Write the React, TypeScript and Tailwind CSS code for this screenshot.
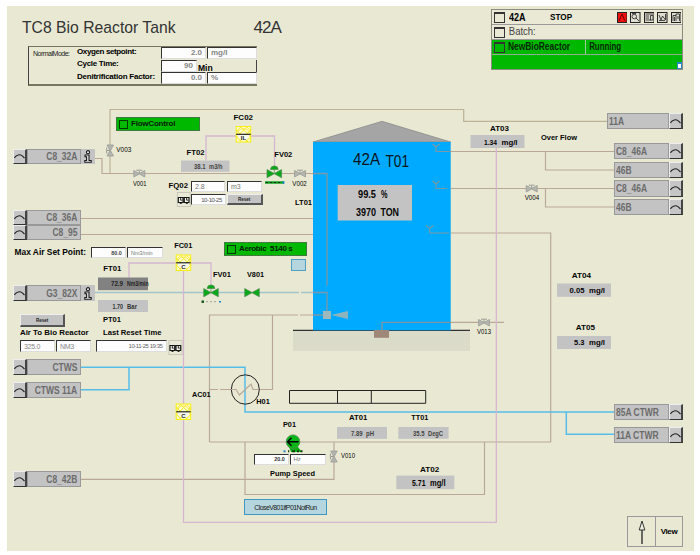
import React from "react";

type LabelSpec = {
  t: string;
  x: number;
  y: number;
  w: number;
  s?: number;
  regular?: boolean;
  fill?: string;
};

const PIPE = "#b9a898";
const SIGNAL = "#d4b6cf";
const WATER = "#56bde9";

const labels: LabelSpec[] = [
  { t: "FC02", x: 233.5, y: 119.7, w: 19.5 },
  { t: "FT02", x: 186.5, y: 155, w: 18 },
  { t: "FV02", x: 274.3, y: 156.5, w: 18 },
  { t: "FQ02", x: 168.5, y: 188, w: 19.5 },
  { t: "LT01", x: 295, y: 205, w: 17 },
  { t: "FC01", x: 174.3, y: 248.2, w: 18 },
  { t: "FT01", x: 103.3, y: 270.5, w: 18 },
  { t: "PT01", x: 103, y: 322.2, w: 18 },
  { t: "Max Air Set Point:", x: 14.5, y: 255, w: 71.5, s: 9.2 },
  { t: "Air To Bio Reactor", x: 20, y: 335, w: 68.5 },
  { t: "Last Reset Time", x: 103, y: 335, w: 58.5 },
  { t: "AC01", x: 192, y: 396.7, w: 18.5 },
  { t: "H01", x: 256.3, y: 404.2, w: 13.5 },
  { t: "FV01", x: 213, y: 277.3, w: 18 },
  { t: "V801", x: 247, y: 277.3, w: 17 },
  { t: "AT03", x: 490, y: 130.7, w: 19 },
  { t: "Over Flow", x: 541, y: 139.7, w: 36 },
  { t: "AT04", x: 571.7, y: 277.5, w: 19.3 },
  { t: "AT05", x: 575.7, y: 330, w: 19.3 },
  { t: "AT01", x: 349, y: 419.5, w: 18.3 },
  { t: "TT01", x: 411.3, y: 419.5, w: 17 },
  { t: "P01", x: 283, y: 427, w: 13 },
  { t: "Pump Speed", x: 270, y: 476, w: 45 },
  { t: "AT02", x: 420, y: 472, w: 19.3 },
  { t: "V002", x: 292.3, y: 185.7, w: 14.5, s: 7, regular: true },
  { t: "V003", x: 116.3, y: 152.3, w: 15, s: 7, regular: true },
  { t: "V001", x: 133, y: 186, w: 13.5, s: 7, regular: true },
  { t: "V004", x: 524.7, y: 200.3, w: 14.5, s: 7, regular: true },
  { t: "V013", x: 477, y: 334.3, w: 14, s: 7, regular: true },
  { t: "V010", x: 341, y: 458.3, w: 14, s: 7, regular: true },
  { t: "42A", x: 353, y: 165, w: 27, s: 16, regular: true, fill: "#0a1420" },
  { t: "T01", x: 385.5, y: 167, w: 23.5, s: 16, regular: true, fill: "#0a1420" },
];

type Reading = { x: number; y: number; w: number; h: number; fill?: string; text: LabelSpec[] };

const readings: Reading[] = [
  { x: 181, y: 160.5, w: 48.5, h: 11.3, text: [{ t: "38.1", x: 194, y: 169, w: 11.5, s: 7, fill: "#444" }, { t: "m3/h", x: 209, y: 169, w: 13.5, s: 7, fill: "#444" }] },
  { x: 98, y: 277.5, w: 50, h: 12.7, fill: "#828282", text: [{ t: "72.9", x: 111, y: 286.3, w: 12, s: 7, fill: "#222" }, { t: "Nm3/min", x: 127, y: 286.3, w: 21.5, s: 7, fill: "#222" }] },
  { x: 98, y: 300, w: 50, h: 12, text: [{ t: "1.70", x: 112.5, y: 308.8, w: 10.5, s: 7, fill: "#333" }, { t: "Bar", x: 127, y: 308.8, w: 10, s: 7, fill: "#333" }] },
  { x: 470.5, y: 135, w: 54, h: 13, text: [{ t: "1.34", x: 484, y: 144.6, w: 13 }, { t: "mg/l", x: 501.5, y: 144.6, w: 16 }] },
  { x: 557, y: 283.5, w: 54, h: 13.3, text: [{ t: "0.05", x: 569.5, y: 293.3, w: 15 }, { t: "mg/l", x: 589, y: 293.3, w: 16 }] },
  { x: 557, y: 336, w: 54, h: 13, text: [{ t: "5.3", x: 574, y: 345.4, w: 10.5 }, { t: "mg/l", x: 589, y: 345.4, w: 16 }] },
  { x: 337, y: 427, w: 50, h: 11.8, text: [{ t: "7.89", x: 351, y: 436, w: 11.5, s: 7, fill: "#444" }, { t: "pH", x: 366, y: 436, w: 8, s: 7, fill: "#444" }] },
  { x: 398.3, y: 427, w: 50.3, h: 11.8, text: [{ t: "35.5", x: 413, y: 436, w: 11.5, s: 7, fill: "#444" }, { t: "DegC", x: 428, y: 436, w: 15, s: 7, fill: "#444" }] },
  { x: 396.3, y: 475.6, w: 58, h: 13.6, text: [{ t: "5.71", x: 412, y: 485.6, w: 13.5, s: 8.5 }, { t: "mg/l", x: 430, y: 485.6, w: 15.5, s: 8.5 }] },
  { x: 337.7, y: 185, w: 74.3, h: 35.5, text: [
    { t: "99.5", x: 358, y: 198, w: 18, s: 10 }, { t: "%", x: 381, y: 198, w: 6.5, s: 10 },
    { t: "3970", x: 356, y: 215.8, w: 20, s: 10 }, { t: "TON", x: 380.5, y: 215.8, w: 18.5, s: 10 },
  ] },
];

function Label({ t, x, y, w, s = 8, regular, fill = "#050505" }: LabelSpec) {
  return (
    <text
      x={x}
      y={y}
      textLength={w}
      lengthAdjust="spacingAndGlyphs"
      fontSize={s}
      fontWeight={regular ? 400 : 700}
      fill={fill}
    >
      {t}
    </text>
  );
}

/** Hand valve: grey bow tie with a small stem. */
function Valve({ x, y, vertical }: { x: number; y: number; vertical?: boolean }) {
  return (
    <g transform={`translate(${x} ${y})${vertical ? " rotate(-90)" : ""}`}>
      <path d="M-5.5-3 L0 0 L5.5-3 V3.5 L0 0.5 L-5.5 3.5Z" fill="#b5b5b0" stroke="#9b9b98" strokeWidth=".8" />
      <path d="M0 0V-3M-3-3.3H3" stroke="#9b9b98" strokeWidth="1" fill="none" />
    </g>
  );
}

/** Automatic valve, with an actuator dome when it is controlled. */
function ControlValve({ x, y, dome }: { x: number; y: number; dome?: boolean }) {
  return (
    <g transform={`translate(${x} ${y})`}>
      <path d="M-7.3-4 L0 0 L7.3-4 V4.3 L0 .3 L-7.3 4.3Z" fill="#08a818" stroke="#5a8a5a" strokeWidth=".7" />
      {dome && <path d="M0 0V-4M-3.8-4A3.8 3.6 0 0 1 3.8-4Z" fill="#08a818" stroke="#4a8a4a" strokeWidth=".7" />}
    </g>
  );
}

function Controller({ x, y, mode }: { x: number; y: number; mode: string }) {
  return (
    <g transform={`translate(${x} ${y})`}>
      <rect x=".5" y=".5" width="14.5" height="15.5" fill="#fdfbd0" stroke="#f8ee10" />
      <path d="M1 5 5 1M1 11 11 1M4 15 15 4M10 16 15 11M11 1 15 5M5 1 15 11M1 4 12 16M1 11 6 16" stroke="#f6e81c" strokeWidth="1" />
      <path d="M1.5 8.3A6.3 6.5 0 0 0 14 8.3Z" fill="#f6f6ee" />
      <path d="M1.5 8A6.3 6.3 0 0 1 14 8" fill="none" stroke="#f3e63a" strokeWidth=".8" />
      <path d="M.5 8.3H15" stroke="#111" strokeWidth="1.1" />
      <text x="7.8" y="14.2" textAnchor="middle" fontSize="6" fontWeight="700" fill="#222">{mode}</text>
    </g>
  );
}

/** Stand pipe inlet inside the tank. */
function Inlet({ x, y, to }: { x: number; y: number; to: number }) {
  return <path d={`M${x - 3.5} ${y - 7.5}L${x} ${y - 4.5}L${x + 3.5} ${y - 7.5}M${x} ${y - 4.5}V${y}H${to}`} stroke="#7c98a4" strokeWidth="1.1" fill="none" />;
}

function Counter({ x, y }: { x: number; y: number }) {
  return (
    <g transform={`translate(${x} ${y})`}>
      <rect x=".5" y=".5" width="13" height="14" fill="#e9e9d6" stroke="#c8c8ba" />
      <path d="M1.5 5.5h4.7v5H1.5zM7.5 5.5h4.7v5H7.5z" fill="#f4f4e8" stroke="#151515" strokeWidth="1.2" />
      <path d="M3.8 6v2.2h1.5M9.8 6v2.2h1.5M3 11.5h2M9 11.5h2" stroke="#151515" strokeWidth=".9" fill="none" />
    </g>
  );
}

function Diagram() {
  return (
    <svg className="absolute left-0 top-0 block font-['Liberation_Sans',sans-serif]" width="700" height="555" viewBox="0 0 700 555">
      {/* tank foundation and shell */}
      <rect x="293" y="331" width="177" height="20" fill="#dbdbc9" />
      <path d="M293 330.3H470" stroke="#333" strokeWidth="1.2" />
      <path d="M313 142L382 121.3L450.7 142Z" fill="#a5a5a5" stroke="#858585" strokeWidth=".7" />
      <rect x="313" y="142" width="137.7" height="188.3" fill="#00aaff" />
      <rect x="374" y="330" width="15" height="7.8" fill="#a08878" />

      {/* process pipes */}
      <g fill="none" stroke={PIPE} strokeWidth="1.2">
        <path d="M110 173V109.5H463.7V121.3H607" stroke="#bcb397" />
        <path d="M95 158.5H102V173.5H313" />
        <path d="M81 218.5H313M81 234.5H313" />
        <path d="M313 315H300M298 315H209.5V442" />
        <path d="M209.5 442H550.7V233H451" />
        <path d="M245 442V494.5H484.5V442" />
        <path d="M81 479.3H334V442" />
        <path d="M209.5 389.5H218M220 389.5H231M259 389.5H272.5V315" />
        <path d="M451 151.5H614M545.5 151.5V170H614" />
        <path d="M451 188.5H614M545.5 188.5V207H614" />
        <path d="M451 322.3H504" />
      </g>
      <g fill="none" stroke="#7c98a4" strokeWidth="1.3">
        <path d="M313 173.5H327V285.5" />
        <path d="M313 292.5H327V311M313 315H323" />
        <path d="M382 330V322.3H451" stroke="#8094a0" />
      </g>
      <path d="M95 292.5H299M301 292.5H313" stroke="#a3c4cb" strokeWidth="1.3" />
      <Inlet x={436} y={151.5} to={451} />
      <Inlet x={436} y={188.5} to={447} />
      <Inlet x={429.7} y={233} to={449} />
      <path d="M331 315L348 311V319Z" fill="#8fb3bd" />
      <rect x="323" y="311" width="8" height="8" fill="#9cb9bd" />

      {/* cooling water */}
      <g fill="none" stroke={WATER} strokeWidth="1.5">
        <path d="M81 367.3H245V412H614" />
        <path d="M81 389.7H129V367.3" />
        <path d="M566.3 412V434.3H614" />
      </g>

      {/* control signals */}
      <g fill="none" stroke={SIGNAL} strokeWidth="1.3">
        <path d="M206 160.5V136H236M251 136H274.5V166" />
        <path d="M129 277.5V263H176M191 263H211V285" />
        <path d="M183.5 271V404M183.5 419V522.3H496.3V148" />
      </g>

      {/* heat exchanger */}
      <ellipse cx="245.3" cy="389.5" rx="14" ry="14.7" fill="none" stroke="#222" />
      <path d="M231 389.5H236L239.5 395L251 384L253 389.5H259" fill="none" stroke={PIPE} strokeWidth="1.2" />

      {/* level strip */}
      <path d="M289.5 390.5H425.7V403.3H289.5ZM337.5 390.5V403.3M371.3 390.5V403.3" fill="none" stroke="#222" />

      <Valve x={110} y={150.5} vertical />
      <Valve x={139.3} y={173.5} />
      <Valve x={300} y={173.5} />
      <Valve x={531.7} y={188.5} />
      <Valve x={484} y={322.5} />
      <Valve x={333.7} y={456.5} vertical />

      <ControlValve x={274.3} y={173.5} dome />
      <ControlValve x={211} y={292.5} dome />
      <ControlValve x={252} y={292.5} />
      <path d="M265 182.5H284" stroke="#0a9a18" strokeWidth="2.4" />
      <path d="M266 182.5H280" stroke="#0a3d0c" strokeWidth="1" strokeDasharray="2 2" />
      <path d="M282.5 182.5H284.5" stroke="#1e86c8" strokeWidth="2.4" />
      <path d="M201.5 301.7H204" stroke="#145214" strokeWidth="2.4" />
      <path d="M206.5 301.7H216" stroke="#555" strokeWidth="1" strokeDasharray="1 3" />
      <path d="M219 301.7H221" stroke="#1e86c8" strokeWidth="1.6" />

      <Controller x={235.7} y={126} mode="IL" />
      <Controller x={175.7} y={254.5} mode="C" />
      <Controller x={175.7} y={403.5} mode="C" />

      {/* pump */}
      <path d="M289 447H298L302 452H291Z" fill="#08b010" />
      <circle cx="293" cy="441.7" r="6.8" fill="#08b818" stroke="#4a8a4a" strokeWidth=".8" />
      <path d="M298.5 441.7H287.5M291.5 437.7L287.5 441.7L291.5 445.7" fill="none" stroke="#000" strokeWidth="1.4" />
      <path d="M283.5 451.3H285.5" stroke="#1e86c8" strokeWidth="2" />
      <path d="M288 451.3H289.2M292 451.3H295M297 451.3H299M300.5 451.3H302.5" stroke="#0d3d0d" strokeWidth="2" />

      <Counter x={176.8} y={192} />
      <Counter x={168.5} y={340} />

      {readings.map((r) => (
        <g key={`${r.x}-${r.y}`}>
          <rect x={r.x} y={r.y} width={r.w} height={r.h} fill={r.fill ?? "#c3c3c3"} />
          {r.text.map((l) => <Label key={l.t} {...l} />)}
        </g>
      ))}
      {labels.map((l) => <Label key={l.t + l.x} {...l} />)}
    </svg>
  );
}

function JumpButton() {
  return (
    <span className="flex h-full w-3.5 shrink-0 items-center justify-center border-b border-l border-r-2 border-t border-b-[#333] border-l-[#eee] border-r-[#444] border-t-[#eee] bg-[#c6c6c6]">
      <svg width="11" height="7" viewBox="0 0 11 7" fill="none" stroke="#222" strokeWidth="1.1">
        <path d="M.5 5Q1 3.5 3 2.6Q5.5 1 8 2.6L10.5 5" />
      </svg>
    </span>
  );
}

function InfoGlyph() {
  return (
    <svg className="ml-auto mr-[3px] shrink-0" width="8" height="13" viewBox="0 0 8 13" fill="#eee" stroke="#1a1a1a" strokeWidth="1.1">
      <circle cx="4" cy="2.2" r="1.6" />
      <path d="M1 5H5V10.5H7.2V12.3H.8V10.5H2.6V6.7H1Z" />
    </svg>
  );
}

function SourceTag({ text, className, info }: { text: string; className: string; info?: boolean }) {
  return (
    <div className={`absolute left-[13px] flex ${className}`}>
      <JumpButton />
      <span className="flex w-[54px] items-center justify-end border border-[#999] bg-[#c3c3c3] pr-[3px] text-[11px] font-bold leading-none text-[#6c6c6c]">
        <span className="origin-right scale-x-[0.77] whitespace-nowrap">{text}</span>
      </span>
      {info && <span className="flex w-3.5 items-center bg-[#c3c3c3]"><InfoGlyph /></span>}
    </div>
  );
}

function TargetTag({ text, className }: { text: string; className: string }) {
  return (
    <div className={`absolute right-[17px] flex ${className}`}>
      <span className="flex min-w-0 flex-1 items-center border border-[#999] bg-[#c3c3c3] pl-px text-[11px] font-bold leading-none text-[#6c6c6c]">
        <span className="origin-left scale-x-[0.77] whitespace-nowrap">{text}</span>
      </span>
      <JumpButton />
    </div>
  );
}

function Field({ children, className }: { children: React.ReactNode; className: string }) {
  return (
    <span className={`flex items-center overflow-hidden whitespace-nowrap border border-b-[#ddd] border-l-[#333] border-r-[#ddd] border-t-[#333] bg-[#fdfdfd] px-[3px] leading-none ${className}`}>
      {children}
    </span>
  );
}

function ResetButton({ className }: { className: string }) {
  return (
    <button className={`absolute flex items-center justify-center border-b-2 border-l border-r-2 border-t border-b-[#555] border-l-[#eee] border-r-[#555] border-t-[#eee] bg-[#c3c3c3] text-[6px] font-bold leading-none text-[#222] ${className}`}>
      <span className="scale-x-75">Reset</span>
    </button>
  );
}

function StatusButton({ children, className }: { children: React.ReactNode; className: string }) {
  return (
    <div className={`absolute flex h-3.5 items-center gap-[3px] border border-[#3f7a3f] bg-[#00b800] pl-0.5 text-[8px] font-bold leading-none text-[#001c00] ${className}`}>
      <span className="size-[9px] border border-[#063806]" />
      {children}
    </div>
  );
}

function SetpointPanel() {
  return (
    <section className="absolute left-7 top-[46px] flex h-10 w-[229px] border border-b-2 border-r-0 border-[#77775f] border-l-[#444] pl-1">
      <span className="mt-[3px] w-[44px] shrink-0 text-[7px] leading-none tracking-[-0.5px] text-[#222]">NormalMode:</span>
      <div className="flex w-[84px] shrink-0 flex-col pt-px text-[8px] font-bold leading-none text-black">
        <span className="h-3 tracking-[-0.38px]">Oxygen setpoint:</span>
        <span className="h-[13px] tracking-[-0.3px]">Cycle Time:</span>
        <span className="whitespace-nowrap tracking-[-0.23px]">Denitrification Factor:</span>
      </div>
      <div className="flex grow flex-col justify-between text-[8px] font-bold text-[#888]">
        <div className="flex h-3 gap-px">
          <Field className="w-[45px] justify-end">2.0</Field>
          <Field className="grow">mg/l</Field>
        </div>
        <div className="flex h-3 gap-px border-r border-[#444]">
          <Field className="w-9 justify-end">90</Field>
          <span className="origin-left scale-x-90 pt-[3px] text-[9.5px] leading-none text-black">Min</span>
        </div>
        <div className="flex h-3 gap-px">
          <Field className="w-[45px] justify-end">0.0</Field>
          <Field className="grow">%</Field>
        </div>
      </div>
    </section>
  );
}

const toolIcons = [
  "M2 9L5 2L8 9",
  "M6 6L9 9M6.5 4.5A2.2 2.2 0 1 1 2 4.5A2.2 2.2 0 0 1 6.5 4.5M2 1.5H6",
  "M1.5 2H9M1.5 4H5M1.5 6H5M1.5 8H7M6.5 3.5V8H9V3.5Z",
  "M2 3L4 8L5.5 4L8.5 8V2M2 8.5H8",
  "M2 9V3.5H5M5 9V2H8.5V9M3.5 5V9M7 4V7",
];

function BatchPanel() {
  const box = <span className="ml-0.5 size-[11px] shrink-0 border border-t-2 border-[#333]" />;
  return (
    <section className="absolute left-[491px] top-[9px] flex h-[61px] w-[192px] flex-col border border-[#8b8b80] bg-[#e9e9d6] leading-none">
      <div className="flex h-[15px] items-center border-b border-[#999]">
        {box}
        <span className="w-[45px] pl-1 text-[11px] font-bold text-black"><span className="inline-block origin-left scale-x-[0.82]">42A</span></span>
        <span className="grow text-[9.5px] font-bold text-black"><span className="inline-block origin-left scale-x-[0.86]">STOP</span></span>
        <div className="flex gap-[3px] pr-px">
          {toolIcons.map((d, i) => (
            <svg
              key={d}
              className={i === 0 ? "bg-[#f01010]" : "bg-[#deded0]"}
              width="10.5"
              height="11"
              viewBox="0 0 10.5 11"
              fill="none"
              stroke={i === 0 ? "#600" : "#333"}
            >
              <rect x=".5" y=".5" width="9.5" height="10" stroke="#222" />
              <path d={d} strokeWidth=".9" />
            </svg>
          ))}
        </div>
      </div>
      <div className="flex h-[15px] items-center border-b border-[#999]">
        {box}
        <span className="origin-left scale-x-95 pl-1 text-[10px] text-[#444]">Batch:</span>
      </div>
      <div className="flex h-[15px] items-center border-b border-[#8fae8f] bg-[#00b800] text-[10px] font-bold text-[#002800]">
        {box}
        <span className="flex h-full w-[81px] items-center border-r border-[#9c9] pl-[3px]"><span className="origin-left scale-x-[0.84]">NewBioReactor</span></span>
        <span className="origin-left scale-x-[0.79] pl-1">Running</span>
      </div>
      <div className="flex grow items-end justify-end bg-[#00b800]">
        <span className="h-[7px] w-[5px] border border-t-2 border-[#2b86c4] bg-white" />
      </div>
    </section>
  );
}

export default function App() {
  return (
    <main className="relative h-[555px] w-[700px] overflow-hidden bg-white pl-[7px] pt-[6px] font-['Liberation_Sans',Arial,sans-serif]">
      <div className="h-[545px] w-[686.5px] bg-[#e9e9d3]" />
      <Diagram />

      <h1 className="absolute left-[21.5px] top-[19px] origin-left scale-x-[0.925] whitespace-nowrap text-[17px] leading-none text-[#333]">TC8 Bio Reactor Tank</h1>
      <span className="absolute left-[253.5px] top-[19px] text-[17px] leading-none tracking-[-0.9px] text-[#333]">42A</span>
      <SetpointPanel />
      <BatchPanel />

      <SourceTag text="C8_32A" className="top-[149px] h-[15px]" info />
      <SourceTag text="C8_36A" className="top-[210px] h-[15px]" />
      <SourceTag text="C8_95" className="top-[225px] h-[15px]" />
      <SourceTag text="G3_82X" className="top-[285px] h-4" info />
      <SourceTag text="CTWS" className="top-[359px] h-4" />
      <SourceTag text="CTWS 11A" className="top-[382px] h-4" />
      <SourceTag text="C8_42B" className="top-[471px] h-4" />

      <TargetTag text="11A" className="top-[113px] h-4 w-[76px]" />
      <TargetTag text="C8_46A" className="top-[143px] h-4 w-[69px]" />
      <TargetTag text="46B" className="top-[162px] h-4 w-[69px]" />
      <TargetTag text="C8_46A" className="top-[180px] h-[17px] w-[69px]" />
      <TargetTag text="46B" className="top-[199px] h-4 w-[69px]" />
      <TargetTag text="85A CTWR" className="top-[404px] h-4 w-[69px]" />
      <TargetTag text="11A CTWR" className="top-[427px] h-4 w-[69px]" />

      <StatusButton className="left-[116px] top-[117px] w-[83.5px]"><span className="tracking-[-0.22px]">FlowControl</span></StatusButton>
      <StatusButton className="left-[224px] top-[242px] w-[83px]"><span className="whitespace-pre tracking-[-0.35px]">Aerobic  5140 s</span></StatusButton>
      <span className="absolute left-[291px] top-[259px] h-3 w-[15px] border border-[#4f9fc2] bg-[#b5d6df]" />
      <button className="absolute left-[244px] top-[499px] flex h-4 w-[83px] items-center justify-center border border-[#3f97c2] bg-[#b5d6df] text-[7px] leading-none tracking-[-0.6px] text-[#222]">
        <span className="whitespace-nowrap">CloseV801IfP01NotRun</span>
      </button>

      <div className="absolute left-[191px] top-[181px] flex h-[11px] gap-0.5 text-[7px] text-[#777]">
        <Field className="w-[34px]">2.8</Field>
        <Field className="w-[35px]">m3</Field>
      </div>
      <div className="absolute left-[191px] top-[194px] flex h-[11px] text-[6px] tracking-[-0.4px] text-[#555]">
        <Field className="w-[35px] justify-end">10-10-25</Field>
      </div>
      <ResetButton className="left-[226.5px] top-[194px] h-[11px] w-9" />

      <div className="absolute left-[91px] top-[247px] flex h-[11px] gap-px text-[6px] text-[#777]">
        <Field className="w-[35px] justify-end font-bold text-[#444]"><span className="origin-right scale-x-90">80.0</span></Field>
        <Field className="w-9"><span className="origin-left scale-x-90">Nm3/min</span></Field>
      </div>
      <ResetButton className="left-[20px] top-[314px] h-[13px] w-[44.5px]" />
      <div className="absolute left-[20px] top-[340px] flex h-3 gap-px text-[7px] tracking-[-0.3px] text-[#888]">
        <Field className="w-[35px]">325.0</Field>
        <Field className="w-[35px]">NM3</Field>
      </div>
      <div className="absolute left-[95.5px] top-[340px] flex h-3 text-[6px] tracking-[-0.45px] text-[#666]">
        <Field className="w-[71px] justify-end">10-11-25 19:35</Field>
      </div>
      <div className="absolute left-[253.5px] top-[454px] flex h-[10.5px] gap-px text-[6px] text-[#777]">
        <Field className="w-[35px] justify-end font-bold text-[#333]"><span className="origin-right scale-x-90">20.0</span></Field>
        <Field className="w-9">Hz</Field>
      </div>

      <button className="absolute left-[627px] top-[516px] flex h-[31px] w-[56px] border border-[#999] text-[8px] font-bold leading-none text-black">
        <span className="flex h-full w-7 items-center justify-center border-r border-[#999]">
          <svg width="8" height="26" viewBox="0 0 8 26" fill="#f2f2e4" stroke="#333">
            <path d="M4 11V25" strokeWidth="1.4" />
            <path d="M4 2L6.8 11H1.2Z" />
          </svg>
        </span>
        <span className="flex h-full grow items-center justify-center tracking-[-0.4px]">View</span>
      </button>
    </main>
  );
}
